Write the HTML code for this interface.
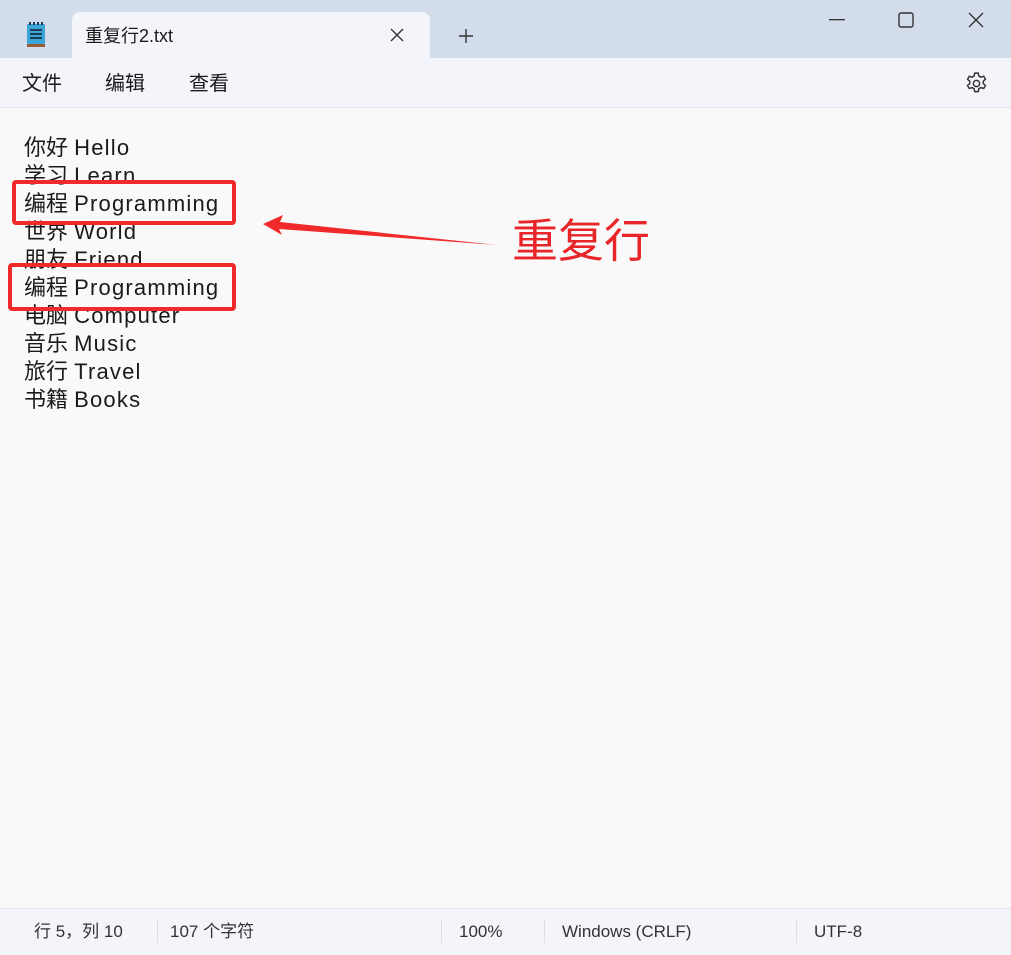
<!DOCTYPE html>
<html><head><meta charset="utf-8"><style>
*{margin:0;padding:0;box-sizing:border-box}
body{width:1011px;height:955px;overflow:hidden;background:#f9f9f9;font-family:"Liberation Sans","Noto Sans CJK SC",sans-serif;position:relative;color:#1a1a1a}
.title{position:absolute;left:0;top:0;width:1011px;height:59px;background:#d3dcea}
.tab{position:absolute;left:72px;top:12px;width:358px;height:48px;background:#f3f5fa;border-radius:8px 8px 0 0}
.tab span{position:absolute;left:13px;top:12px;font-size:18px;line-height:24px;color:#1a1a1a}
.menu{position:absolute;left:0;top:58px;width:1011px;height:50px;background:#f3f5fa;border-bottom:1px solid #e3e5ea}
.menu span{position:absolute;top:13px;font-size:20px;line-height:26px}
.ed{position:absolute;left:24px;top:134px;font-size:22px;line-height:28px;white-space:pre}
.ed b{font-weight:normal;letter-spacing:1.2px}
.box{position:absolute;border:4px solid #f02a2a;border-radius:4px}
.status{position:absolute;left:0;top:908px;width:1011px;height:47px;background:#f3f5fa;border-top:1px solid #e3e5ea;font-size:17px;color:#333}
.status span{position:absolute;top:12px;line-height:22px;height:22px}
.sep{position:absolute;top:10px;width:1px;height:24px;background:#dcdee3}
</style></head><body>
<div class="title">
<svg style="position:absolute;left:26px;top:22px" width="20" height="26" viewBox="0 0 20 26"><rect x="1" y="2" width="18" height="20" rx="1" fill="#3aa6d8"/><rect x="1" y="22" width="18" height="3" fill="#9a5a32"/><g fill="#1c3d5a"><rect x="3" y="0" width="2" height="3"/><rect x="7" y="0" width="2" height="3"/><rect x="11" y="0" width="2" height="3"/><rect x="15" y="0" width="2" height="3"/><rect x="4" y="7" width="12" height="2"/><rect x="4" y="11" width="12" height="2"/><rect x="4" y="15" width="12" height="2"/></g></svg>
<div class="tab"><span>重复行2.txt</span>
<svg style="position:absolute;left:318px;top:16px" width="14" height="14" viewBox="0 0 14 14" stroke="#333" stroke-width="1.4"><path d="M1 1L13 13M13 1L1 13"/></svg></div>
<svg style="position:absolute;left:458px;top:28px" width="16" height="16" viewBox="0 0 16 16" stroke="#333" stroke-width="1.4"><path d="M8 1V15M1 8H15"/></svg>
<svg style="position:absolute;left:829px;top:19px" width="16" height="2"><rect width="16" height="1.3" fill="#333"/></svg>
<svg style="position:absolute;left:898px;top:12px" width="16" height="16" viewBox="0 0 16 16"><rect x="1" y="1" width="14" height="14" rx="2" fill="none" stroke="#333" stroke-width="1.4"/></svg>
<svg style="position:absolute;left:968px;top:12px" width="16" height="16" viewBox="0 0 16 16" stroke="#333" stroke-width="1.4"><path d="M1 1L15 15M15 1L1 15"/></svg>
</div>
<div class="menu"><span style="left:22px">文件</span><span style="left:105px">编辑</span><span style="left:189px">查看</span>
<svg style="position:absolute;left:964px;top:13px" width="25" height="25" viewBox="0 0 24 24" fill="none" stroke="#333" stroke-width="1.4"><path d="M10.3 2h3.4l.6 2.8 1.9 1.1 2.7-.9 1.7 2.9-2.1 1.9v2.2l2.1 1.9-1.7 2.9-2.7-.9-1.9 1.1-.6 2.8h-3.4l-.6-2.8-1.9-1.1-2.7.9-1.7-2.9 2.1-1.9v-2.2L3.4 7.9l1.7-2.9 2.7.9 1.9-1.1z"/><circle cx="12" cy="12" r="3"/></svg></div>
<div class="ed">你好 <b>Hello</b>
学习 <b>Learn</b>
编程 <b>Programming</b>
世界 <b>World</b>
朋友 <b>Friend</b>
编程 <b>Programming</b>
电脑 <b>Computer</b>
音乐 <b>Music</b>
旅行 <b>Travel</b>
书籍 <b>Books</b></div>
<div class="box" style="left:12px;top:180px;width:224px;height:45px"></div>
<div class="box" style="left:8px;top:263px;width:228px;height:48px"></div>
<svg style="position:absolute;left:0;top:0" width="1011" height="955"><path d="M263 224L283 215L280 222L497 245L279 229L282 235Z" fill="#f02a2a"/></svg>
<div style="position:absolute;left:512px;top:213px;font-size:46px;color:#e8262a;line-height:56px">重复行</div>
<div class="status"><span style="left:34px">行 5，列 10</span><div class="sep" style="left:157px"></div><span style="left:170px">107 个字符</span><div class="sep" style="left:441px"></div><span style="left:459px">100%</span><div class="sep" style="left:544px"></div><span style="left:562px">Windows (CRLF)</span><div class="sep" style="left:796px"></div><span style="left:814px">UTF-8</span></div>
</body></html>
